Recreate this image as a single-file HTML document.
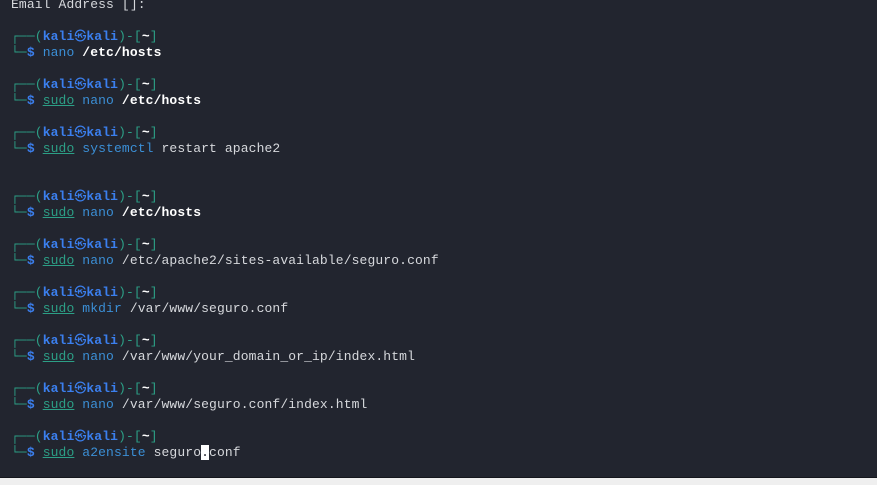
<!DOCTYPE html>
<html><head><style>
body{margin:0;width:877px;height:485px;background:#efefef;overflow:hidden;position:relative}
#t{position:absolute;left:0;top:0;width:877px;height:477px;background:#22252f;border-bottom:1px solid #15171d}
pre{margin:0;position:absolute;left:11px;top:-3px;font-family:"Liberation Mono",monospace;font-size:13px;line-height:16px;color:#d6d8dc;letter-spacing:0.12px}
.g{color:#2c9f86}.k{color:#3b7fee;font-weight:bold}.b{color:#3b7fee;font-weight:bold}
.c{color:#3b8fd6}.s{color:#2c9f86;text-decoration:underline}.w{color:#fff;font-weight:bold}
.cur{background:#fff;color:#22252f}
.r{display:inline-block;width:12px;height:16px;line-height:16px;vertical-align:top;overflow:visible;font-size:12px;font-weight:normal;text-align:center}
</style></head><body><div id="t">
<pre>Email Address []:

<span class="g">┌──(</span><span class="k">kali<span class="r">㉿</span>kali</span><span class="g">)-[</span><span class="w">~</span><span class="g">]</span>
<span class="g">└─</span><span class="b">$</span> <span class="c">nano</span> <span class="w">/etc/hosts</span>

<span class="g">┌──(</span><span class="k">kali<span class="r">㉿</span>kali</span><span class="g">)-[</span><span class="w">~</span><span class="g">]</span>
<span class="g">└─</span><span class="b">$</span> <span class="s">sudo</span> <span class="c">nano</span> <span class="w">/etc/hosts</span>

<span class="g">┌──(</span><span class="k">kali<span class="r">㉿</span>kali</span><span class="g">)-[</span><span class="w">~</span><span class="g">]</span>
<span class="g">└─</span><span class="b">$</span> <span class="s">sudo</span> <span class="c">systemctl</span> restart apache2


<span class="g">┌──(</span><span class="k">kali<span class="r">㉿</span>kali</span><span class="g">)-[</span><span class="w">~</span><span class="g">]</span>
<span class="g">└─</span><span class="b">$</span> <span class="s">sudo</span> <span class="c">nano</span> <span class="w">/etc/hosts</span>

<span class="g">┌──(</span><span class="k">kali<span class="r">㉿</span>kali</span><span class="g">)-[</span><span class="w">~</span><span class="g">]</span>
<span class="g">└─</span><span class="b">$</span> <span class="s">sudo</span> <span class="c">nano</span> /etc/apache2/sites-available/seguro.conf

<span class="g">┌──(</span><span class="k">kali<span class="r">㉿</span>kali</span><span class="g">)-[</span><span class="w">~</span><span class="g">]</span>
<span class="g">└─</span><span class="b">$</span> <span class="s">sudo</span> <span class="c">mkdir</span> /var/www/seguro.conf

<span class="g">┌──(</span><span class="k">kali<span class="r">㉿</span>kali</span><span class="g">)-[</span><span class="w">~</span><span class="g">]</span>
<span class="g">└─</span><span class="b">$</span> <span class="s">sudo</span> <span class="c">nano</span> /var/www/your_domain_or_ip/index.html

<span class="g">┌──(</span><span class="k">kali<span class="r">㉿</span>kali</span><span class="g">)-[</span><span class="w">~</span><span class="g">]</span>
<span class="g">└─</span><span class="b">$</span> <span class="s">sudo</span> <span class="c">nano</span> /var/www/seguro.conf/index.html

<span class="g">┌──(</span><span class="k">kali<span class="r">㉿</span>kali</span><span class="g">)-[</span><span class="w">~</span><span class="g">]</span>
<span class="g">└─</span><span class="b">$</span> <span class="s">sudo</span> <span class="c">a2ensite</span> seguro<span class="cur">.</span>conf</pre>
</div></body></html>
